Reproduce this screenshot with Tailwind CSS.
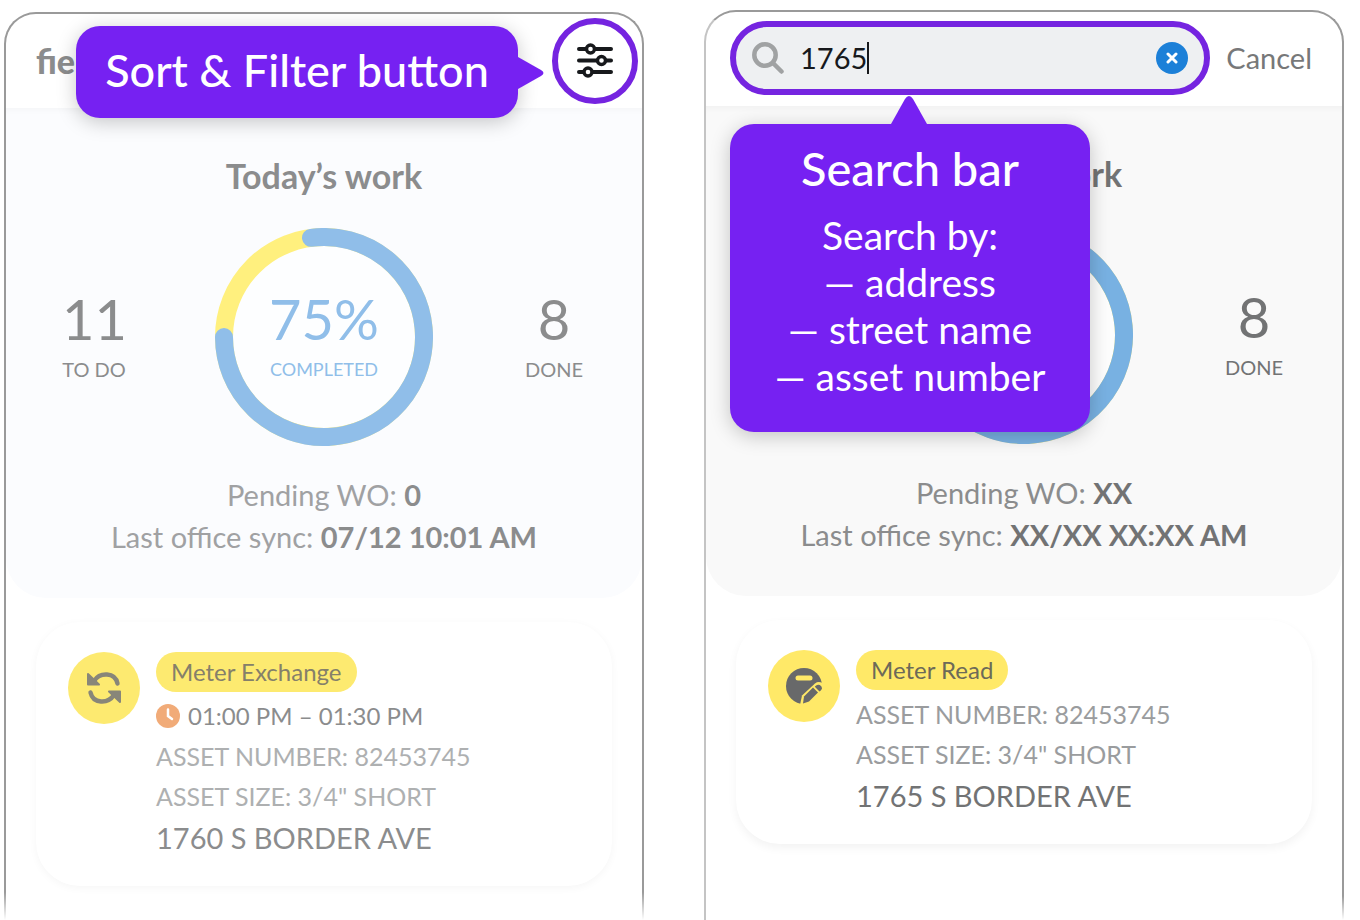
<!DOCTYPE html>
<html lang="en">
<head>
  <meta charset="UTF-8" />
  <meta name="viewport" content="width=device-width, initial-scale=1.0"/>
  <title>Field app guide: filter and search</title>
  <script src="https://cdn.jsdelivr.net/npm/@tailwindcss/browser@4"></script>
</head>
<body class="bg-white font-['Lato',sans-serif]">
  <main class="min-h-screen grid grid-cols-2 gap-[60px] pt-[10px] pl-1 pr-4">

    <!-- Work list with filter button -->
    <section class="relative mt-0.5 border-2 border-b-0 border-[#9a9a9a] rounded-t-[32px] text-[#8b8c8d]">
      <header class="h-[94px] flex items-center justify-between pl-[30px] pr-1">
        <div class="text-[34px] leading-10 font-black">field</div>
        <button type="button" aria-label="Sort and filter" class="size-[86px] rounded-full border-6 border-[#7524e0] bg-white flex items-center justify-center">
          <svg class="w-9 h-9" viewBox="0 0 36 36" fill="none" stroke="#17191c" stroke-width="4" stroke-linecap="round">
            <path d="M2 6H34M2 17.500H34M2 29H34"/>
            <g fill="#fff" stroke-width="3.400">
              <circle cx="13.500" cy="6" r="4"/>
              <circle cx="24.500" cy="17.500" r="4"/>
              <circle cx="11" cy="29" r="4"/>
            </g>
          </svg>
        </button>
      </header>

      <div class="bg-[#fbfcfe] rounded-b-[40px] pt-12 pb-10 shadow-[inset_0_6px_6px_-4px_rgba(0,0,0,0.03)]">
        <h2 class="text-[34px] leading-10 font-bold text-center">Today’s work</h2>
        <div class="mt-8 px-14 flex items-center justify-between">
          <div class="w-16 text-center">
            <div class="text-[56px] leading-16">11</div>
            <div class="text-xl leading-9 whitespace-nowrap">TO DO</div>
          </div>
          <div class="relative size-[218px]">
            <svg class="size-full" viewBox="0 0 218 218" fill="#fdfeff" stroke-width="18">
              <circle cx="109" cy="109" r="100" stroke="#fff07e"/>
              <path d="M96 9.850A100 100 0 1 1 9 109" fill="none" stroke="#90bee9" stroke-linecap="round"/>
            </svg>
            <div class="absolute inset-0 flex flex-col items-center justify-center text-[#90bee9]">
              <div class="text-[56px] leading-16">75%</div>
              <div class="text-lg leading-9">COMPLETED</div>
            </div>
          </div>
          <div class="w-16 text-center">
            <div class="text-[56px] leading-16">8</div>
            <div class="text-xl leading-9">DONE</div>
          </div>
        </div>
        <div class="mt-7 text-center text-[29px] leading-[42px]">
          <p class="text-[#a0a1a3]">Pending WO: <b class="text-[#8b8c8d]">0</b></p>
          <p class="text-[#a0a1a3]">Last office sync: <b class="text-[#8b8c8d]">07/12 10:01 AM</b></p>
        </div>
      </div>

      <article class="mt-6 mx-[30px] px-8 pt-[30px] pb-[26px] flex gap-4 rounded-[44px] bg-white shadow-[0_2px_8px_rgba(0,0,0,0.04)]">
        <div class="size-[72px] shrink-0 rounded-full bg-[#fdea70] flex items-center justify-center">
          <svg class="size-9" viewBox="0 0 36 36" fill="none" stroke="#888679" stroke-width="4.400" stroke-linecap="round">
            <path d="M8 11C14 2 29 2 31.500 13.500M4.500 22.500C7 34 22 34 28 25"/>
            <path d="M2 4L13 14.500H2ZM34 32L23 21.500H34Z" fill="#888679" stroke-width="2" stroke-linejoin="round"/>
          </svg>
        </div>
        <div class="text-2xl leading-10">
          <div class="w-fit px-[15px] rounded-full bg-[#fdea70] text-[#85806a]">Meter Exchange</div>
          <div class="mt-1 flex items-center gap-2">
            <svg class="size-6" viewBox="0 0 24 24" fill="none">
              <circle cx="12" cy="12" r="12" fill="#f1ab78"/>
              <path d="M12 5.500V12L16 15" stroke="#fff" stroke-width="2.500" stroke-linecap="round"/>
            </svg>
            <span>01:00 PM – 01:30 PM</span>
          </div>
          <div class="text-[25px] text-[#aeb0b1]">ASSET NUMBER: 82453745</div>
          <div class="text-[25px] text-[#aeb0b1]">ASSET SIZE: 3/4" SHORT</div>
          <div class="text-[29px] leading-11">1760 S BORDER AVE</div>
        </div>
      </article>

      <div class="absolute bottom-0 -inset-x-0.5 h-7 bg-linear-to-b from-white/0 to-white"></div>

      <!-- Callout -->
      <div class="absolute top-3 left-[70px] right-[124px] h-[92px] pb-1 rounded-[24px] bg-[#7621f2] text-white shadow-[0_4px_20px_rgba(0,0,0,0.22)] flex items-center justify-center">
        <p class="text-[45px] leading-14 font-medium whitespace-nowrap">Sort &amp; Filter button</p>
        <svg class="absolute left-full top-[31px] w-[26px] h-8" viewBox="0 0 26 32" fill="#7621f2">
          <path d="M0 0L23 13Q28 16 23 19L0 32Z"/>
        </svg>
      </div>
    </section>

    <!-- Work list while searching -->
    <section class="relative border-2 border-b-0 border-[#9a9a9a] border-l-[#c4c4c4] rounded-t-[32px] text-[#727374]">
      <header class="h-[94px] pb-0.5 flex items-center gap-4 pl-6 pr-[30px]">
        <div class="flex-1 h-[74px] min-w-0 rounded-full border-6 border-[#7524e0] bg-[#eef0f2] flex items-center px-4">
          <svg class="size-8 shrink-0" viewBox="0 0 32 32" fill="none" stroke="#a0a2a3" stroke-width="4.500" stroke-linecap="round">
            <circle cx="13" cy="13" r="10.700"/>
            <path d="M21 21L29.500 29.500"/>
          </svg>
          <input type="text" value="1765" aria-label="Search" class="ml-4 field-sizing-content text-[29px] leading-9 text-[#17191c] bg-transparent outline-none" />
          <span class="w-0.5 h-8 bg-[#17191c]"></span>
          <button type="button" aria-label="Clear search" class="ml-auto size-8 shrink-0 rounded-full bg-[#1c80d8] flex items-center justify-center">
            <svg class="size-3" viewBox="0 0 12 12" stroke="#fff" stroke-width="3" stroke-linecap="round">
              <path d="M2 2L10 10M10 2L2 10"/>
            </svg>
          </button>
        </div>
        <button type="button" class="text-[29px] leading-9 text-[#777879]">Cancel</button>
      </header>

      <div class="bg-[#f9f9f9] rounded-b-[40px] pt-12 pb-10 shadow-[inset_0_6px_6px_-4px_rgba(0,0,0,0.04)]">
        <h2 class="text-[34px] leading-10 font-bold text-center">Today’s work</h2>
        <div class="mt-8 px-14 flex items-center justify-between">
          <div class="w-16"></div>
          <svg class="size-[218px]" viewBox="0 0 218 218" fill="#fdfdfd" stroke-width="18">
            <circle cx="109" cy="109" r="100" stroke="#ffe968"/>
            <path d="M96 9.850A100 100 0 1 1 9 109" fill="none" stroke="#78b1e2" stroke-linecap="round"/>
          </svg>
          <div class="w-16 text-center">
            <div class="text-[56px] leading-16">8</div>
            <div class="text-xl leading-9">DONE</div>
          </div>
        </div>
        <div class="mt-7 text-center text-[29px] leading-[42px]">
          <p class="text-[#8b8c8d]">Pending WO: <b class="text-[#727374]">XX</b></p>
          <p class="text-[#8b8c8d]">Last office sync: <b class="text-[#727374]">XX/XX XX:XX AM</b></p>
        </div>
      </div>

      <article class="mt-6 mx-[30px] px-8 pt-[30px] pb-[26px] flex gap-4 rounded-[44px] bg-white shadow-[0_4px_10px_rgba(0,0,0,0.05)]">
        <div class="size-[72px] shrink-0 rounded-full bg-[#ffe968] flex items-center justify-center">
          <svg class="size-9" viewBox="0 0 36 36">
            <circle cx="18" cy="18" r="18" fill="#68696a"/>
            <rect x="9.500" y="7.500" width="17" height="5" rx="2.500" fill="#ffe968"/>
            <path d="M14 37L16 27.500L29 15.500Q33 12.500 38 16V37Z" fill="#ffe968"/>
            <path d="M17 35.500L18 28.500L27 19.500L32 24.500L23 33.500Z" fill="#68696a"/>
            <path d="M29.500 18Q32.500 15.500 35 18Q37 20.500 34.500 22.800L33.500 23.500L28.800 18.800Z" fill="#68696a"/>
          </svg>
        </div>
        <div class="text-2xl leading-10">
          <div class="w-fit px-[15px] rounded-full bg-[#ffe968] text-[#6d6a58]">Meter Read</div>
          <div class="mt-1 text-[25px] text-[#9a9c9e]">ASSET NUMBER: 82453745</div>
          <div class="text-[25px] text-[#9a9c9e]">ASSET SIZE: 3/4" SHORT</div>
          <div class="text-[29px] leading-11">1765 S BORDER AVE</div>
        </div>
      </article>

      <div class="absolute bottom-0 -right-0.5 w-8 h-6 bg-linear-to-b from-white/0 to-white"></div>

      <!-- Callout -->
      <div class="absolute top-28 left-6 w-[360px] h-[308px] pt-4 rounded-[24px] bg-[#7621f2] text-white text-center shadow-[0_4px_20px_rgba(0,0,0,0.22)]">
        <svg class="absolute bottom-full left-[161px] w-9 h-7" viewBox="0 0 36 28" fill="#7621f2">
          <path d="M0 28L14 3Q18 -3 22 3L36 28Z"/>
        </svg>
        <h3 class="text-[47px] leading-14 font-medium">Search bar</h3>
        <p class="mt-4 text-[39px] leading-[47px]">Search by:<br>— address<br>— street name<br>— asset number</p>
      </div>
    </section>

  </main>
</body>
</html>
